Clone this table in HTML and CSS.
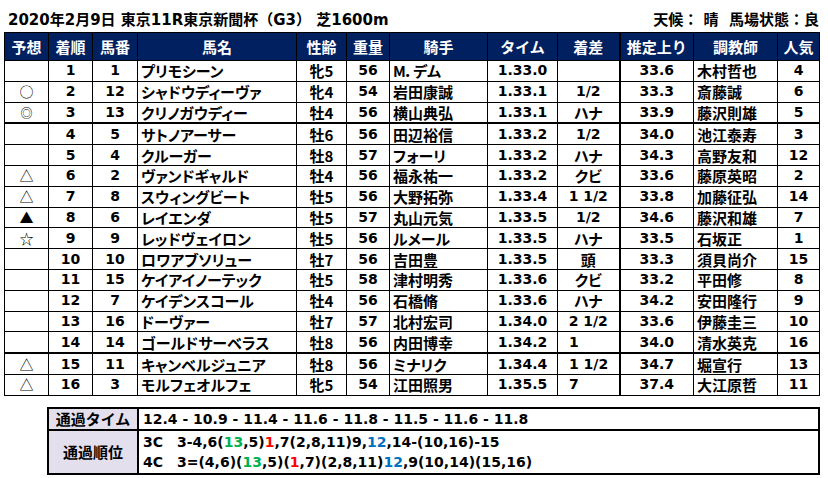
FILE: index.html
```html
<!DOCTYPE html>
<html lang="ja">
<head>
<meta charset="utf-8">
<title>東京新聞杯 結果</title>
<link rel="stylesheet" href="styles.css">
</head>
<body>
<div class="page">
  <div class="topbar">
    <div class="title">2020年2月9日 東京11R東京新聞杯（G3） 芝1600m</div>
    <div class="cond">天候： 晴&nbsp; 馬場状態：良</div>
  </div>
  <table class="race">
    <colgroup>
      <col class="c-mark"><col class="c-rank"><col class="c-num"><col class="c-name"><col class="c-sex"><col class="c-wt"><col class="c-jockey"><col class="c-time"><col class="c-diff"><col class="c-last"><col class="c-trainer"><col class="c-pop">
    </colgroup>
    <thead>
      <tr><th>予想</th><th>着順</th><th>馬番</th><th>馬名</th><th>性齢</th><th>重量</th><th>騎手</th><th>タイム</th><th>着差</th><th class="tl">推定上り</th><th>調教師</th><th>人気</th></tr>
    </thead>
    <tbody>
      <tr><td class="mk"></td><td>1</td><td>1</td><td class="jp">プリモシーン</td><td class="jc">牝5</td><td>56</td><td class="jp">M．デム</td><td>1.33.0</td><td></td><td class="tl">33.6</td><td class="jp">木村哲也</td><td>4</td></tr>
      <tr><td class="mk">○</td><td>2</td><td>12</td><td class="jp">シャドウディーヴァ</td><td class="jc">牝4</td><td>54</td><td class="jp">岩田康誠</td><td>1.33.1</td><td>1/2</td><td class="tl">33.3</td><td class="jp">斎藤誠</td><td>6</td></tr>
      <tr><td class="mk sm">◎</td><td>3</td><td>13</td><td class="jp">クリノガウディー</td><td class="jc">牡4</td><td>56</td><td class="jp">横山典弘</td><td>1.33.1</td><td class="jc">ハナ</td><td class="tl">33.9</td><td class="jp">藤沢則雄</td><td>5</td></tr>
      <tr class="sep"><td class="mk"></td><td>4</td><td>5</td><td class="jp">サトノアーサー</td><td class="jc">牡6</td><td>56</td><td class="jp">田辺裕信</td><td>1.33.2</td><td>1/2</td><td class="tl">34.0</td><td class="jp">池江泰寿</td><td>3</td></tr>
      <tr><td class="mk"></td><td>5</td><td>4</td><td class="jp">クルーガー</td><td class="jc">牡8</td><td>57</td><td class="jp">フォーリ</td><td>1.33.2</td><td class="jc">ハナ</td><td class="tl">34.3</td><td class="jp">高野友和</td><td>12</td></tr>
      <tr><td class="mk">△</td><td>6</td><td>2</td><td class="jp">ヴァンドギャルド</td><td class="jc">牡4</td><td>56</td><td class="jp">福永祐一</td><td>1.33.2</td><td class="jc">クビ</td><td class="tl">33.6</td><td class="jp">藤原英昭</td><td>2</td></tr>
      <tr><td class="mk">△</td><td>7</td><td>8</td><td class="jp">スウィングビート</td><td class="jc">牡5</td><td>56</td><td class="jp">大野拓弥</td><td>1.33.4</td><td>1 1/2</td><td class="tl">33.8</td><td class="jp">加藤征弘</td><td>14</td></tr>
      <tr><td class="mk">▲</td><td>8</td><td>6</td><td class="jp">レイエンダ</td><td class="jc">牡5</td><td>57</td><td class="jp">丸山元気</td><td>1.33.5</td><td>1/2</td><td class="tl">34.6</td><td class="jp">藤沢和雄</td><td>7</td></tr>
      <tr><td class="mk">☆</td><td>9</td><td>9</td><td class="jp">レッドヴェイロン</td><td class="jc">牡5</td><td>56</td><td class="jp">ルメール</td><td>1.33.5</td><td class="jc">ハナ</td><td class="tl">33.5</td><td class="jp">石坂正</td><td>1</td></tr>
      <tr><td class="mk"></td><td>10</td><td>10</td><td class="jp">ロワアブソリュー</td><td class="jc">牡7</td><td>56</td><td class="jp">吉田豊</td><td>1.33.5</td><td class="jc">頭</td><td class="tl">33.3</td><td class="jp">須貝尚介</td><td>15</td></tr>
      <tr><td class="mk"></td><td>11</td><td>15</td><td class="jp">ケイアイノーテック</td><td class="jc">牡5</td><td>58</td><td class="jp">津村明秀</td><td>1.33.6</td><td class="jc">クビ</td><td class="tl">33.2</td><td class="jp">平田修</td><td>8</td></tr>
      <tr><td class="mk"></td><td>12</td><td>7</td><td class="jp">ケイデンスコール</td><td class="jc">牡4</td><td>56</td><td class="jp">石橋脩</td><td>1.33.6</td><td class="jc">ハナ</td><td class="tl">34.2</td><td class="jp">安田隆行</td><td>9</td></tr>
      <tr><td class="mk"></td><td>13</td><td>16</td><td class="jp">ドーヴァー</td><td class="jc">牡7</td><td>57</td><td class="jp">北村宏司</td><td>1.34.0</td><td>2 1/2</td><td class="tl">33.6</td><td class="jp">伊藤圭三</td><td>10</td></tr>
      <tr><td class="mk"></td><td>14</td><td>14</td><td class="jp">ゴールドサーベラス</td><td class="jc">牡8</td><td>56</td><td class="jp">内田博幸</td><td>1.34.2</td><td class="lf">1</td><td class="tl">34.0</td><td class="jp">清水英克</td><td>16</td></tr>
      <tr class="sep"><td class="mk">△</td><td>15</td><td>11</td><td class="jp">キャンベルジュニア</td><td class="jc">牡8</td><td>56</td><td class="jp">ミナリク</td><td>1.34.4</td><td class="lf">1 1/2</td><td class="tl">34.7</td><td class="jp">堀宣行</td><td>13</td></tr>
      <tr><td class="mk">△</td><td>16</td><td>3</td><td class="jp">モルフェオルフェ</td><td class="jc">牝5</td><td>54</td><td class="jp">江田照男</td><td>1.35.5</td><td class="lf">7</td><td class="tl">37.4</td><td class="jp">大江原哲</td><td>11</td></tr>
    </tbody>
  </table>
  <table class="pass">
    <tr>
      <th>通過タイム</th>
      <td>12.4 - 10.9 - 11.4 - 11.6 - 11.8 - 11.5 - 11.6 - 11.8</td>
    </tr>
    <tr class="order">
      <th>通過順位</th>
      <td>
        <div class="line"><span class="corner">3C</span>3-4,6(<span class="g">13</span>,5)<span class="r">1</span>,7(2,8,11)9,<span class="b">12</span>,14-(10,16)-15</div>
        <div class="line"><span class="corner">4C</span>3=(4,6)(<span class="g">13</span>,5)(<span class="r">1</span>,7)(2,8,11)<span class="b">12</span>,9(10,14)(15,16)</div>
      </td>
    </tr>
  </table>
</div>
</body>
</html>
```
FILE: styles.css
```css
html, body {
  margin: 0;
  padding: 0;
  background: #ffffff;
}

body {
  font-family: "DejaVu Sans", "Noto Sans CJK JP", sans-serif;
  font-weight: bold;
  font-size: 14px;
  color: #000;
}

.page {
  width: 828px;
  height: 478px;
  padding: 0 0 0 4px;
  box-sizing: border-box;
}

.topbar {
  display: flex;
  justify-content: space-between;
  align-items: flex-end;
  height: 32px;
  padding: 0 9px 2px 4px;
  box-sizing: border-box;
}

.title, .cond {
  font-size: 15px;
  line-height: 20px;
}

.race {
  border-collapse: collapse;
  table-layout: fixed;
  width: 815px;
}

.c-mark { width: 44px; }
.c-rank { width: 44px; }
.c-num { width: 45px; }
.c-name { width: 159px; }
.c-sex { width: 50px; }
.c-wt { width: 43px; }
.c-jockey { width: 98px; }
.c-time { width: 70px; }
.c-diff { width: 62px; }
.c-last { width: 74px; }
.c-trainer { width: 84px; }
.c-pop { width: 42px; }

.race th {
  background: #002060;
  color: #ffffff;
  font-family: "Noto Sans CJK JP", sans-serif;
  font-size: 15px;
  font-weight: bold;
  height: 27px;
  padding: 0;
  border: 1px solid #000;
  text-align: center;
  line-height: 20px;
}

.race td {
  border: 1px solid #000;
  padding: 0;
  height: 19.8px;
  line-height: 19px;
  text-align: center;
  white-space: nowrap;
  overflow: hidden;
}

.race td.jp {
  text-align: left;
  padding-left: 3px;
  font-family: "Noto Sans CJK JP", sans-serif;
  font-size: 15px;
  font-feature-settings: "palt";
}

.race td.jc {
  font-family: "Noto Sans CJK JP", sans-serif;
  font-size: 15px;
  font-feature-settings: "palt";
}

.race td.lf {
  text-align: left;
  padding-left: 11px;
}

.race .tl {
  border-left: 2px solid #000;
}

.race tr.sep td {
  border-top: 2px solid #000;
}

.race td.mk {
  font-family: "Noto Sans CJK JP", sans-serif;
  font-weight: normal;
  font-size: 14px;
}

.race td.mk.sm {
  font-size: 12px;
}

.pass {
  margin: 11px 0 0 43px;
  border-collapse: collapse;
  width: 773px;
  border: 2px solid #000;
}

.pass th {
  width: 88px;
  background: #e4dfec;
  font-family: "Noto Sans CJK JP", sans-serif;
  font-size: 15px;
  font-weight: bold;
  border: 2px solid #000;
  padding: 0;
  height: 20px;
  line-height: 20px;
  text-align: center;
}

.pass td {
  border: 2px solid #000;
  padding: 0 0 0 4px;
  text-align: left;
  line-height: 20px;
  white-space: nowrap;
}

.pass .order td {
  padding-top: 1px;
  padding-bottom: 1px;
}

.pass .line {
  height: 20px;
}

.corner {
  display: inline-block;
  width: 34px;
}

.g { color: #00b050; }
.r { color: #ff0000; }
.b { color: #0070c0; }
```
